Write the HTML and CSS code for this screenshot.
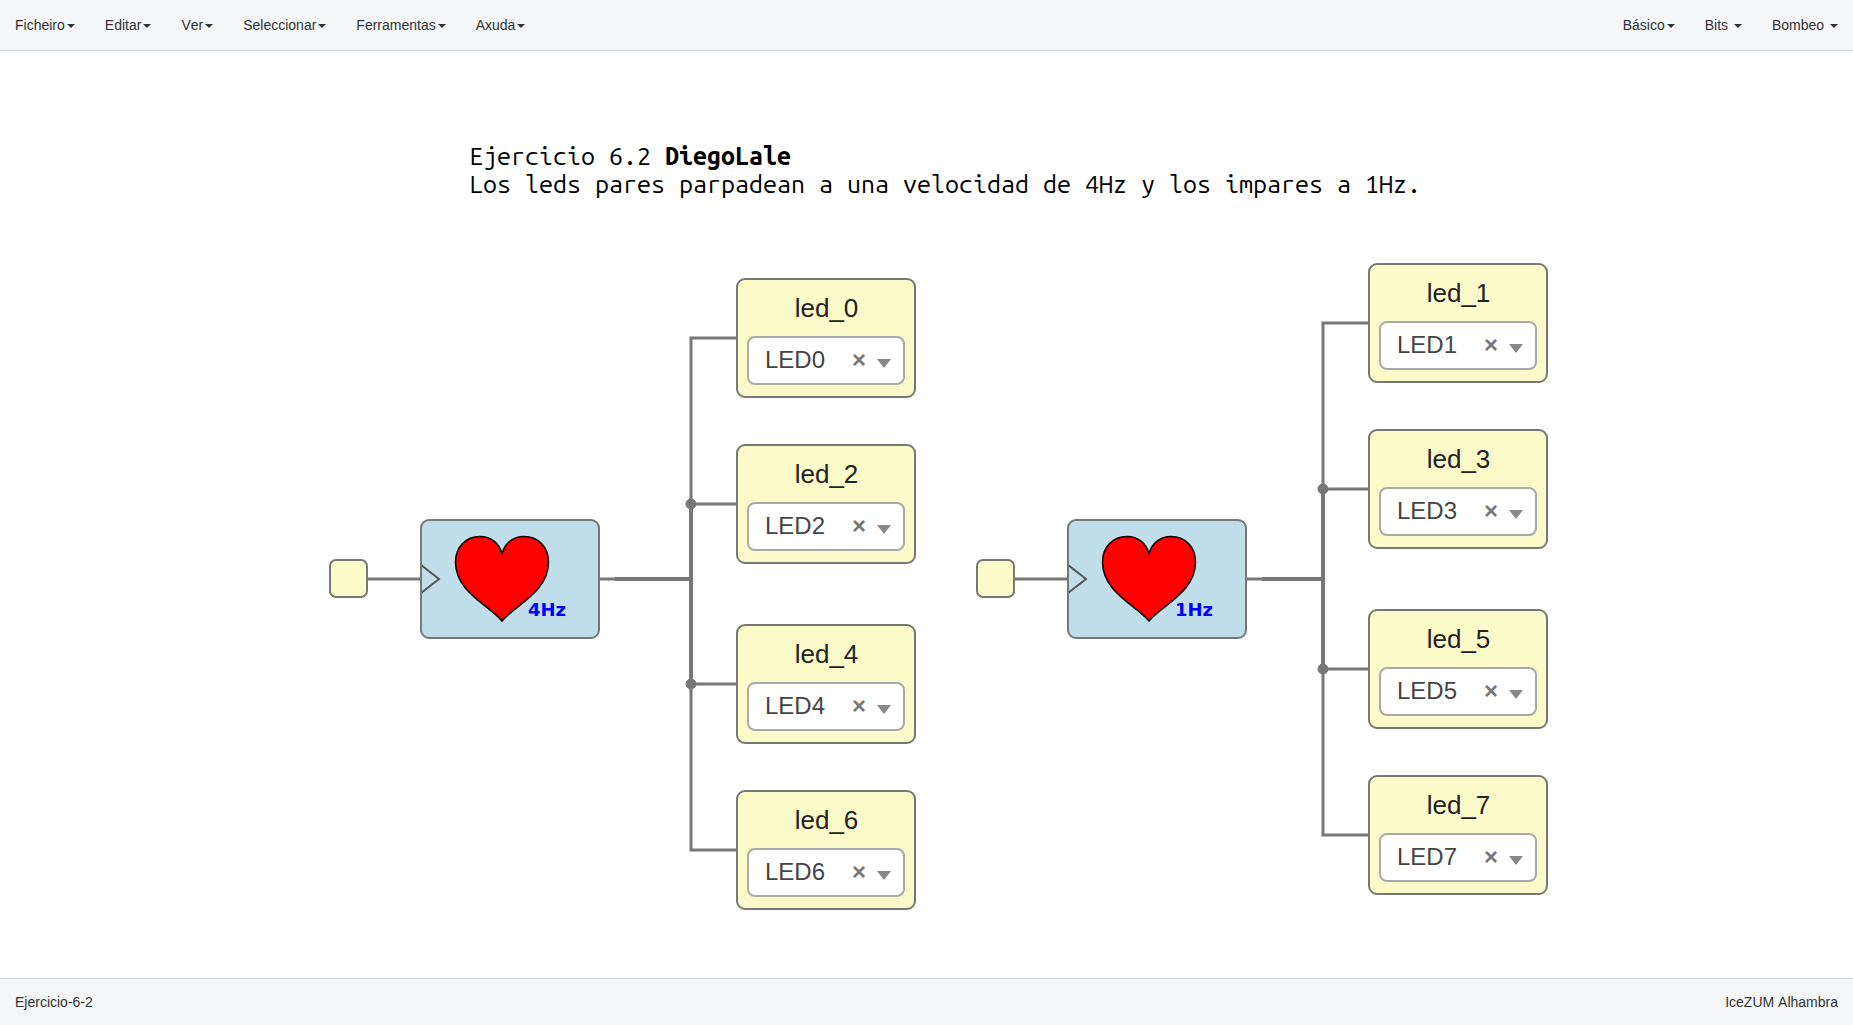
FILE: index.html
```html
<!DOCTYPE html>
<html lang="gl">
<head>
<meta charset="utf-8">
<title>Ejercicio-6-2</title>
<link rel="stylesheet" href="styles.css">
</head>
<body>
<header class="navbar">
  <nav class="menu">
    <a href="#">Ficheiro<span class="caret"></span></a>
    <a href="#">Editar<span class="caret"></span></a>
    <a href="#">Ver<span class="caret"></span></a>
    <a href="#">Seleccionar<span class="caret"></span></a>
    <a href="#">Ferramentas<span class="caret"></span></a>
    <a href="#">Axuda<span class="caret"></span></a>
  </nav>
  <nav class="menu">
    <a href="#">Básico<span class="caret"></span></a>
    <a href="#">Bits <span class="caret"></span></a>
    <a href="#">Bombeo <span class="caret"></span></a>
  </nav>
</header>

<main class="canvas">
  <p class="note">Ejercicio 6.2 <strong>DiegoLale</strong><br>Los leds pares parpadean a una velocidad de 4Hz y los impares a 1Hz.</p>

  <section class="circuit even">
    <svg class="wires" width="600" height="640" aria-hidden="true">
      <path d="M38 316H92M270 316H290"/>
      <path class="bus" d="M286 316H362"/>
      <path d="M408 75H362V587H408M362 241H408M362 421H408"/>
      <path class="bus" d="M362 241V421"/>
      <circle cx="362" cy="241" r="5"/>
      <circle cx="362" cy="421" r="5"/>
    </svg>
    <div class="node port"></div>
    <div class="node code">
      <svg width="176" height="116" viewBox="2 2 176 116" aria-hidden="true">
        <path class="clock" d="M1 46L19 60L1 74"/>
        <path class="heart" d="M82 34.500C79 24 71 17.500 60 17.500C46 17.500 35.500 28 35.500 43C35.500 73 69 86 82 102C95 86 128.500 73 128.500 43C128.500 28 118 17.500 104 17.500C93 17.500 85 24 82 34.500Z"/>
        <text x="108" y="97">4Hz</text>
      </svg>
    </div>
    <div class="node led first">
      <label for="led0">led_0</label>
      <div class="pin"><select id="led0"><option>LED0</option></select><button type="button" aria-label="Clear">×</button></div>
    </div>
    <div class="node led second">
      <label for="led2">led_2</label>
      <div class="pin"><select id="led2"><option>LED2</option></select><button type="button" aria-label="Clear">×</button></div>
    </div>
    <div class="node led third">
      <label for="led4">led_4</label>
      <div class="pin"><select id="led4"><option>LED4</option></select><button type="button" aria-label="Clear">×</button></div>
    </div>
    <div class="node led fourth">
      <label for="led6">led_6</label>
      <div class="pin"><select id="led6"><option>LED6</option></select><button type="button" aria-label="Clear">×</button></div>
    </div>
  </section>

  <section class="circuit odd">
    <svg class="wires" width="600" height="640" aria-hidden="true">
      <path d="M38 316H92M270 316H290"/>
      <path class="bus" d="M286 316H347"/>
      <path d="M393 60H347V572H393M347 226H393M347 406H393"/>
      <path class="bus" d="M347 226V406"/>
      <circle cx="347" cy="226" r="5"/>
      <circle cx="347" cy="406" r="5"/>
    </svg>
    <div class="node port"></div>
    <div class="node code">
      <svg width="176" height="116" viewBox="2 2 176 116" aria-hidden="true">
        <path class="clock" d="M1 46L19 60L1 74"/>
        <path class="heart" d="M82 34.500C79 24 71 17.500 60 17.500C46 17.500 35.500 28 35.500 43C35.500 73 69 86 82 102C95 86 128.500 73 128.500 43C128.500 28 118 17.500 104 17.500C93 17.500 85 24 82 34.500Z"/>
        <text x="108" y="97">1Hz</text>
      </svg>
    </div>
    <div class="node led first">
      <label for="led1">led_1</label>
      <div class="pin"><select id="led1"><option>LED1</option></select><button type="button" aria-label="Clear">×</button></div>
    </div>
    <div class="node led second">
      <label for="led3">led_3</label>
      <div class="pin"><select id="led3"><option>LED3</option></select><button type="button" aria-label="Clear">×</button></div>
    </div>
    <div class="node led third">
      <label for="led5">led_5</label>
      <div class="pin"><select id="led5"><option>LED5</option></select><button type="button" aria-label="Clear">×</button></div>
    </div>
    <div class="node led fourth">
      <label for="led7">led_7</label>
      <div class="pin"><select id="led7"><option>LED7</option></select><button type="button" aria-label="Clear">×</button></div>
    </div>
  </section>
</main>

<footer class="status">
  <span>Ejercicio-6-2</span>
  <span>IceZUM Alhambra</span>
</footer>
</body>
</html>
```
FILE: styles.css
```css
* { box-sizing: border-box; }

body {
  margin: 0;
  min-height: 100vh;
  display: flex;
  flex-direction: column;
  font: 14px/20px "Liberation Sans", Arial, sans-serif;
  font-kerning: none;
  color: #333;
  background: #fff;
}

.navbar, .status {
  display: flex;
  justify-content: space-between;
  background: #f4f6f8;
}
.navbar { border-bottom: 1px solid #cfdbdd; }
.status { border-top: 1px solid #d3d8dc; padding: 13px 15px; }

.menu { display: flex; }
.menu a {
  padding: 15px;
  color: #333;
  text-decoration: none;
  white-space: pre;
}
.caret {
  display: inline-block;
  margin-left: 2px;
  vertical-align: middle;
  border-top: 4px solid;
  border-left: 4px solid transparent;
  border-right: 4px solid transparent;
}

/* Free canvas: nodes are placed at their diagram coordinates */
.canvas {
  position: relative;
  flex: 1;
  min-height: 880px;
}
.note {
  position: absolute;
  left: 469px;
  top: 91px;
  margin: 0;
  font: 25px/28px "Ubuntu Mono", "DejaVu Sans Mono", monospace;
  color: #000;
  white-space: nowrap;
}

.circuit { position: absolute; top: 212px; }
.even { left: 329px; }
.odd { left: 976px; }

.wires { position: absolute; left: 0; top: 0; }
.wires path { fill: none; stroke: #777; stroke-width: 3; }
.wires .bus { stroke-width: 4; }
.wires circle { fill: #777; stroke: #777; }

.node {
  position: absolute;
  border: 2px solid #777;
  border-radius: 9px;
}
.port {
  left: 0;
  top: 296px;
  width: 39px;
  height: 39px;
  border-radius: 7px;
  background: #fbfac9;
}
.code {
  left: 91px;
  top: 256px;
  width: 180px;
  height: 120px;
  background: #c0deea;
}
.code svg { display: block; }
.clock { fill: none; stroke: #555; stroke-width: 2; }
.heart { fill: #f00; stroke: #000; stroke-width: 1.500; }
.code text { font: bold 18px "DejaVu Sans", sans-serif; fill: #00f; }

.led {
  width: 180px;
  height: 120px;
  padding: 10px 9px;
  background: #fbfac9;
}
.even .led { left: 407px; }
.even .first { top: 15px; }
.even .second { top: 181px; }
.even .third { top: 361px; }
.even .fourth { top: 527px; }
.odd .led { left: 392px; }
.odd .first { top: 0; }
.odd .second { top: 166px; }
.odd .third { top: 346px; }
.odd .fourth { top: 512px; }

.led label {
  display: block;
  margin-bottom: 10px;
  padding-left: 1px;
  font-size: 26px;
  line-height: 36px;
  color: #222;
  text-align: center;
}
.pin { position: relative; }
.pin select {
  appearance: none;
  display: block;
  width: 100%;
  height: 49px;
  margin: 0;
  padding: 0 52px 2px 16px;
  border: 2px solid #aaa;
  border-radius: 8px;
  background: #fff;
  font: 24px "Liberation Sans", Arial, sans-serif;
  color: #444;
}
.pin::after {
  content: "";
  position: absolute;
  right: 14px;
  top: 23px;
  border-top: 9px solid #888;
  border-left: 7px solid transparent;
  border-right: 7px solid transparent;
}
.pin button {
  position: absolute;
  right: 39px;
  top: 10px;
  padding: 0;
  border: 0;
  background: none;
  font: bold 24px/28px "Liberation Sans", Arial, sans-serif;
  color: #777;
}
```
